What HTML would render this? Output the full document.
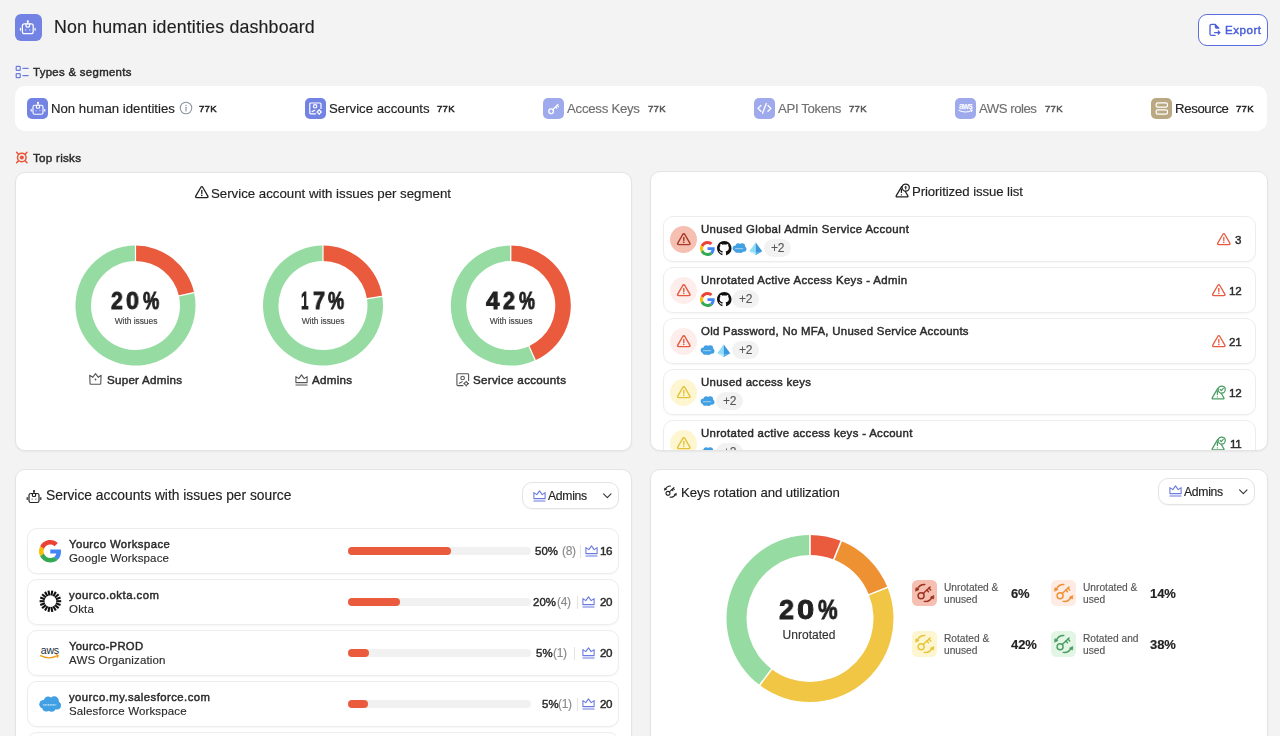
<!DOCTYPE html><html><head><meta charset="utf-8"><style>
html,body{margin:0;padding:0;}
body{width:1280px;height:736px;overflow:hidden;background:#f3f3f3;position:relative;font-family:"Liberation Sans",sans-serif;color:#222;}
.t{position:absolute;line-height:1;white-space:nowrap;will-change:transform;-webkit-text-stroke:0.15px currentColor;}
.b{position:absolute;box-sizing:border-box;}
.i{position:absolute;overflow:visible;}
</style></head><body><div style="position:relative;width:1280px;height:736px;overflow:hidden;">
<div class="b" style="left:15px;top:14px;width:27px;height:27px;background:#7283e3;border-radius:6px;"></div>
<svg class="i" style="left:17.4px;top:19.1px;width:21.6px;height:18.36px;" viewBox="0 0 20 17"><g fill="none" stroke="#fff" stroke-width="1.15" stroke-linecap="round" stroke-linejoin="round" ><rect x="5" y="4.5" width="10" height="9" rx="1.8"/><path d="M10 2.6v1.9"/><path d="M8.4 4.6v1.9q0 1 1 1h1.2q1 0 1-1V4.6"/><path d="M3.2 8.6v1.8M16.8 8.6v1.8"/></g><circle cx="10" cy="2.1" r="1.05" fill="#fff"/><circle cx="8.1" cy="10.1" r="0.55" fill="#fff"/><circle cx="11.9" cy="10.1" r="0.55" fill="#fff"/></svg>
<div class="t" style="top:19.33px;font-size:17.8px;color:#1f1f1f;letter-spacing:0.162px;left:53.80px;">Non human identities dashboard</div>
<div class="b" style="left:1198px;top:14px;width:70px;height:32px;border:1px solid #5b6ee0;border-radius:9px;background:#fff;"></div>
<svg class="i" style="left:1207.5px;top:23px;width:14px;height:14px;" viewBox="0 0 14 14"><g fill="none" stroke="#4a5fd8" stroke-width="1.3" stroke-linecap="round" stroke-linejoin="round" ><path d="M7.2 1.4H3.6Q2 1.4 2 3V10.9Q2 12.4 3.6 12.4H7"/><path d="M7.4 1.6L10.9 5.1H8.4Q7.4 5.1 7.4 4.1Z" fill="#4a5fd8"/><path d="M6.6 9.6H10.6"/></g><path d="M10.2 7.4L12.4 9.6L10.2 11.8Z" fill="#4a5fd8" stroke="#4a5fd8" stroke-width="0.6" stroke-linejoin="round"/></svg>
<div class="t" style="top:24.18px;font-size:11.6px;-webkit-text-stroke:0.45px #4a5fd8;color:#4a5fd8;letter-spacing:0.495px;left:1225.00px;">Export</div>
<svg class="i" style="left:15px;top:65px;width:15px;height:14px;" viewBox="0 0 15 14"><g fill="none" stroke="#6b7be0" stroke-width="1.2" stroke-linecap="round" stroke-linejoin="round" ><rect x="1.2" y="1.3" width="4" height="4" rx="0.6"/><rect x="1.2" y="8.6" width="4" height="4" rx="0.6"/><path d="M7.9 3.3h5.3M7.9 10.6h5.3"/></g></svg>
<div class="t" style="top:67.15px;font-size:11.4px;-webkit-text-stroke:0.45px #2b2b2b;color:#2b2b2b;letter-spacing:0.315px;left:32.80px;">Types &amp; segments</div>
<div class="b" style="left:15px;top:86px;width:1252px;height:45px;background:#fff;border-radius:10px;"></div>
<div class="b" style="left:27px;top:98px;width:21px;height:21px;background:#7283e3;border-radius:5px;"></div>
<svg class="i" style="left:27px;top:98px;width:21px;height:21px;" viewBox="0 0 21 21"><g transform="translate(1,2.7)"><g fill="none" stroke="#fff" stroke-width="1.15" stroke-linecap="round" stroke-linejoin="round" ><rect x="5" y="4.5" width="10" height="9" rx="1.8"/><path d="M10 2.6v1.9"/><path d="M8.4 4.6v1.9q0 1 1 1h1.2q1 0 1-1V4.6"/><path d="M3.2 8.6v1.8M16.8 8.6v1.8"/></g><circle cx="10" cy="2.1" r="1.05" fill="#fff"/><circle cx="8.1" cy="10.1" r="0.55" fill="#fff"/><circle cx="11.9" cy="10.1" r="0.55" fill="#fff"/></g></svg>
<div class="t" style="top:101.93px;font-size:13.2px;left:51.00px;">Non human identities</div>
<div class="t" style="top:103.97px;font-size:9.6px;-webkit-text-stroke:0.45px #222;letter-spacing:0.259px;left:199.00px;">77K</div>
<svg class="i" style="left:178.5px;top:101.4px;width:14px;height:14px;" viewBox="0 0 14 14"><circle cx="7" cy="7" r="5.75" fill="none" stroke="#8a929c" stroke-width="1.05"/><path d="M7 6.3v3.6" stroke="#8a929c" stroke-width="1.1" stroke-linecap="round"/><circle cx="7" cy="4.4" r="0.65" fill="#8a929c"/></svg>
<div class="b" style="left:305px;top:98px;width:21px;height:21px;background:#7283e3;border-radius:5px;"></div>
<svg class="i" style="left:305px;top:98px;width:21px;height:21px;" viewBox="0 0 21 21"><g fill="none" stroke="#fff" stroke-width="1.2" stroke-linecap="round" stroke-linejoin="round" ><path d="M10.6 15.8H5.9Q4.8 15.8 4.8 14.7V6.1Q4.8 5 5.9 5H14.9Q16 5 16 6.1V10.4"/><circle cx="10.1" cy="8.3" r="1.7"/><path d="M7.1 13.6L9.7 12.3"/><circle cx="14.2" cy="14" r="1.55"/><path d="M14.2 11.6v0.7M14.2 15.7v0.7M16.6 14h-0.7M12.5 14h-0.7"/></g></svg>
<div class="t" style="top:101.93px;font-size:13.2px;letter-spacing:0.012px;left:329.00px;">Service accounts</div>
<div class="t" style="top:103.97px;font-size:9.6px;-webkit-text-stroke:0.45px #222;letter-spacing:0.259px;left:437.00px;">77K</div>
<div class="b" style="left:542.5px;top:98px;width:21px;height:21px;background:#9faaed;border-radius:5px;"></div>
<svg class="i" style="left:542.5px;top:98px;width:21px;height:21px;" viewBox="0 0 21 21"><g fill="none" stroke="#fff" stroke-width="1.3" stroke-linecap="round" stroke-linejoin="round" ><circle cx="8.1" cy="13.3" r="2.35"/><path d="M9.7 11.7L15 6.4M12.6 8.8L13.9 10.1M14.1 7.3L15.4 8.6"/></g></svg>
<div class="t" style="top:101.93px;font-size:13.2px;color:#6f6f6f;letter-spacing:-0.256px;left:567.00px;">Access Keys</div>
<div class="t" style="top:103.97px;font-size:9.6px;-webkit-text-stroke:0.45px #555;color:#555;letter-spacing:0.259px;left:647.50px;">77K</div>
<div class="b" style="left:753.5px;top:98px;width:21px;height:21px;background:#9faaed;border-radius:5px;"></div>
<svg class="i" style="left:753.5px;top:98px;width:21px;height:21px;" viewBox="0 0 21 21"><g fill="none" stroke="#fff" stroke-width="1.3" stroke-linecap="round" stroke-linejoin="round" ><path d="M6.9 7.5L4 10.4L6.9 13.3M14 7.5L16.9 10.4L14 13.3M12.3 5.5L8.5 15.3"/></g></svg>
<div class="t" style="top:101.93px;font-size:13.2px;color:#6f6f6f;letter-spacing:-0.348px;left:778.00px;">API Tokens</div>
<div class="t" style="top:103.97px;font-size:9.6px;-webkit-text-stroke:0.45px #555;color:#555;letter-spacing:0.259px;left:848.50px;">77K</div>
<div class="b" style="left:954.5px;top:98px;width:21px;height:21px;background:#9faaed;border-radius:5px;"></div>
<svg class="i" style="left:954.5px;top:98px;width:21px;height:21px;" viewBox="0 0 21 21"><text x="10.6" y="10.9" text-anchor="middle" font-size="8.2" fill="#fff" stroke="#fff" stroke-width="0.25" letter-spacing="-0.4" font-family="Liberation Sans">aws</text><path d="M3.8 12.4q6.6 3.4 13.2 0" fill="none" stroke="#fff" stroke-width="1" stroke-linecap="round"/><path d="M15.6 11.6l1.5 0.6-0.5 1.4" fill="none" stroke="#fff" stroke-width="0.9" stroke-linecap="round"/></svg>
<div class="t" style="top:101.93px;font-size:13.2px;color:#6f6f6f;letter-spacing:-0.482px;left:979.00px;">AWS roles</div>
<div class="t" style="top:103.97px;font-size:9.6px;-webkit-text-stroke:0.45px #555;color:#555;letter-spacing:0.259px;left:1045.00px;">77K</div>
<div class="b" style="left:1150.5px;top:98px;width:21px;height:21px;background:#baa882;border-radius:5px;"></div>
<svg class="i" style="left:1150.5px;top:98px;width:21px;height:21px;" viewBox="0 0 21 21"><g fill="none" stroke="#fff" stroke-width="1.2" stroke-linecap="round" stroke-linejoin="round" ><rect x="5.1" y="4.8" width="11.4" height="4.3" rx="1.6"/><rect x="5.1" y="11.9" width="11.4" height="4.2" rx="1.6"/><path d="M7.2 7h0.1M7.2 14h0.1" stroke-opacity="0.5"/></g></svg>
<div class="t" style="top:101.93px;font-size:13.2px;letter-spacing:-0.356px;left:1175.00px;">Resource</div>
<div class="t" style="top:103.97px;font-size:9.6px;-webkit-text-stroke:0.45px #222;letter-spacing:0.259px;left:1236.00px;">77K</div>
<svg class="i" style="left:15px;top:151px;width:14px;height:13px;" viewBox="0 0 14 13"><g fill="none" stroke="#e8553a" stroke-width="1.5" stroke-linecap="round" stroke-linejoin="round" ><circle cx="6.8" cy="6.5" r="4.3"/><path d="M1.6 1.3l1.8 1.8M12 1.3l-1.8 1.8M1.6 11.7l1.8-1.8M12 11.7l-1.8-1.8"/></g><circle cx="6.8" cy="6.5" r="2.05" fill="#e8553a"/></svg>
<div class="t" style="top:152.18px;font-size:11.6px;-webkit-text-stroke:0.45px #2b2b2b;color:#2b2b2b;letter-spacing:0.279px;left:33.00px;">Top risks</div>
<div class="b" style="left:15px;top:171.5px;width:617px;height:279px;background:#fff;border-radius:10px;border:1px solid #e4e4e4;box-shadow:0 1px 2px rgba(0,0,0,0.05);"></div>
<svg class="i" style="left:195px;top:186px;width:14px;height:13px;" viewBox="0 0 14 13"><g fill="none" stroke="#222" stroke-width="1.3" stroke-linecap="round" stroke-linejoin="round" ><path d="M5.75 1.5Q6.8 -0.2 7.85 1.5L12.7 9.9Q13.7 11.6 11.7 11.6H1.9Q-0.1 11.6 0.9 9.9Z"/><path d="M6.8 4.5v2.9"/></g><circle cx="6.8" cy="9.4" r="0.78" fill="#222"/></svg>
<div class="t" style="top:187.04px;font-size:13.3px;letter-spacing:-0.026px;left:211.00px;">Service account with issues per segment</div>
<svg class="i" style="left:73px;top:243px;width:125px;height:125px;" viewBox="73 243 125 125"><path fill="#e95b3c" d="M135.50 245.60A60 60 0 0 1 194.06 292.51L178.93 295.89A44.5 44.5 0 0 0 135.50 261.10Z"/><path fill="#96dca2" d="M194.06 292.51A60 60 0 1 1 135.50 245.60L135.50 261.10A44.5 44.5 0 1 0 178.93 295.89Z"/><path d="M135.50 244.60L135.50 262.10" stroke="#fff" stroke-width="1.2"/><path d="M195.03 292.29L177.95 296.11" stroke="#fff" stroke-width="1.2"/></svg>
<div class="t" style="top:288.50px;left:110.75px;font-size:24.4px;font-weight:700;color:#222;transform:scaleX(0.8714);transform-origin:0 0;-webkit-text-stroke:0.9px #222;">2</div>
<div class="t" style="top:288.50px;left:126.15px;font-size:24.4px;font-weight:700;color:#222;transform:scaleX(0.9526);transform-origin:0 0;-webkit-text-stroke:0.9px #222;">0</div>
<div class="t" style="top:288.50px;left:143.15px;font-size:24.4px;font-weight:700;color:#222;transform:scaleX(0.7460);transform-origin:0 0;-webkit-text-stroke:0.9px #222;">%</div>
<div class="t" style="top:317.00px;font-size:8.5px;color:#444;letter-spacing:-0.065px;left:85.50px;width:100px;text-align:center;">With issues</div>
<svg class="i" style="left:261px;top:243px;width:125px;height:125px;" viewBox="261 243 125 125"><path fill="#e95b3c" d="M323.00 245.60A60 60 0 0 1 382.26 296.21L366.95 298.64A44.5 44.5 0 0 0 323.00 261.10Z"/><path fill="#96dca2" d="M382.26 296.21A60 60 0 1 1 323.00 245.60L323.00 261.10A44.5 44.5 0 1 0 366.95 298.64Z"/><path d="M323.00 244.60L323.00 262.10" stroke="#fff" stroke-width="1.2"/><path d="M383.25 296.06L365.96 298.80" stroke="#fff" stroke-width="1.2"/></svg>
<div class="t" style="top:288.50px;left:301.15px;font-size:24.4px;font-weight:700;color:#222;transform:scaleX(0.5538);transform-origin:0 0;-webkit-text-stroke:0.9px #222;">1</div>
<div class="t" style="top:288.50px;left:312.55px;font-size:24.4px;font-weight:700;color:#222;transform:scaleX(0.8861);transform-origin:0 0;-webkit-text-stroke:0.9px #222;">7</div>
<div class="t" style="top:288.50px;left:328.15px;font-size:24.4px;font-weight:700;color:#222;transform:scaleX(0.7414);transform-origin:0 0;-webkit-text-stroke:0.9px #222;">%</div>
<div class="t" style="top:317.00px;font-size:8.5px;color:#444;letter-spacing:-0.065px;left:273.00px;width:100px;text-align:center;">With issues</div>
<svg class="i" style="left:448px;top:243px;width:125px;height:125px;" viewBox="448 243 125 125"><path fill="#e95b3c" d="M510.80 245.60A60 60 0 0 1 535.32 360.36L528.98 346.21A44.5 44.5 0 0 0 510.80 261.10Z"/><path fill="#96dca2" d="M535.32 360.36A60 60 0 1 1 510.80 245.60L510.80 261.10A44.5 44.5 0 1 0 528.98 346.21Z"/><path d="M510.80 244.60L510.80 262.10" stroke="#fff" stroke-width="1.2"/><path d="M535.73 361.27L528.58 345.30" stroke="#fff" stroke-width="1.2"/></svg>
<div class="t" style="top:288.50px;left:486.25px;font-size:24.4px;font-weight:700;color:#222;transform:scaleX(0.9895);transform-origin:0 0;-webkit-text-stroke:0.9px #222;">4</div>
<div class="t" style="top:288.50px;left:502.65px;font-size:24.4px;font-weight:700;color:#222;transform:scaleX(0.8861);transform-origin:0 0;-webkit-text-stroke:0.9px #222;">2</div>
<div class="t" style="top:288.50px;left:518.55px;font-size:24.4px;font-weight:700;color:#222;transform:scaleX(0.7368);transform-origin:0 0;-webkit-text-stroke:0.9px #222;">%</div>
<div class="t" style="top:317.00px;font-size:8.5px;color:#444;letter-spacing:-0.065px;left:460.80px;width:100px;text-align:center;">With issues</div>
<svg class="i" style="left:89px;top:372.5px;width:13px;height:12px;" viewBox="0 0 13 12"><g fill="none" stroke="#555" stroke-width="1.1" stroke-linecap="round" stroke-linejoin="round" ><path d="M0.7 2.3L3.7 4.3L6.5 0.6L9.3 4.3L12.1 2.3L11.7 10.9Q11.6 11.3 11.2 11.3H1.6Q1.2 11.3 1.1 10.9Z"/></g><circle cx="6.5" cy="6.5" r="0.9" fill="#555"/></svg>
<div class="t" style="top:373.98px;font-size:11.6px;-webkit-text-stroke:0.45px #2b2b2b;color:#2b2b2b;letter-spacing:0.253px;left:106.75px;">Super Admins</div>
<svg class="i" style="left:294.5px;top:373.5px;width:13px;height:12px;" viewBox="0 0 13 12"><g fill="none" stroke="#555" stroke-width="1.1" stroke-linecap="round" stroke-linejoin="round" ><path d="M0.9 2.6L3.8 4.6L6.5 0.9L9.2 4.6L12.1 2.6V8.6H0.9Z"/><path d="M0.9 11h11.2"/></g></svg>
<div class="t" style="top:373.98px;font-size:11.6px;-webkit-text-stroke:0.45px #2b2b2b;color:#2b2b2b;letter-spacing:0.264px;left:311.75px;">Admins</div>
<svg class="i" style="left:455.5px;top:372.5px;width:14px;height:14px;" viewBox="0 0 14 14"><g fill="none" stroke="#555" stroke-width="1.1" stroke-linecap="round" stroke-linejoin="round" ><path d="M7 12.6H1.9Q0.9 12.6 0.9 11.6V1.7Q0.9 0.8 1.9 0.8H11.7Q12.6 0.8 12.6 1.7V7.4"/><circle cx="6.6" cy="5" r="1.8"/><path d="M3.3 10.2L6.2 8.8"/><circle cx="10.2" cy="10.6" r="1.6"/><path d="M10.2 8.2v0.6M10.2 12.4v0.6M12.6 10.6h-0.6M8.4 10.6h-0.6"/></g></svg>
<div class="t" style="top:373.98px;font-size:11.6px;-webkit-text-stroke:0.45px #2b2b2b;color:#2b2b2b;letter-spacing:0.311px;left:472.70px;">Service accounts</div>
<div class="b" style="left:650px;top:170.5px;width:618px;height:280px;background:#fff;border-radius:10px;border:1px solid #e4e4e4;box-shadow:0 1px 2px rgba(0,0,0,0.05);"></div>
<svg class="i" style="left:894.5px;top:182.1px;width:16px;height:16px;" viewBox="0 0 16 16"><g fill="none" stroke="#222" stroke-width="1.25" stroke-linecap="round" stroke-linejoin="round" ><path d="M6.6 4.6L1.2 13.9Q0.8 14.9 1.9 14.9H12.2Q13.3 14.9 12.9 13.9L10.2 9.3"/><circle cx="10.7" cy="5.6" r="3.6"/><path d="M6.4 7v3.4"/></g><circle cx="6.4" cy="12.9" r="0.65" fill="#222"/><path d="M10.7 3.7L12.3 5.6H9.1Z" fill="#222"/><path d="M10.7 5.2v2.3" stroke="#222" stroke-width="1.1"/></svg>
<div class="t" style="top:185.13px;font-size:13.2px;letter-spacing:-0.094px;left:912.00px;">Prioritized issue list</div>
<div style="position:absolute;left:652px;top:172px;width:615px;height:278px;overflow:hidden;border-radius:0 0 9px 9px;">
<div style="position:absolute;left:-652px;top:-172px;width:1280px;height:736px;">
<div class="b" style="left:663px;top:216px;width:592.5px;height:46px;background:#fff;border:1px solid #ededed;border-radius:10px;box-shadow:0 1px 1.5px rgba(0,0,0,0.04);"></div>
<div class="b" style="left:669.8px;top:225.7px;width:27.2px;height:27.2px;background:#f5c0b2;border-radius:50%;"></div>
<svg class="i" style="left:676.6px;top:232.6px;width:14px;height:13px;" viewBox="0 0 14 13"><g fill="none" stroke="#a83a26" stroke-width="1.45" stroke-linecap="round" stroke-linejoin="round" ><path d="M5.75 1.5Q6.8 -0.2 7.85 1.5L12.7 9.9Q13.7 11.6 11.7 11.6H1.9Q-0.1 11.6 0.9 9.9Z"/><path d="M6.8 4.5v2.9"/></g><circle cx="6.8" cy="9.4" r="0.78" fill="#a83a26"/></svg>
<div class="t" style="top:223.60px;font-size:11.4px;-webkit-text-stroke:0.45px #2b2b2b;color:#2b2b2b;letter-spacing:0.376px;left:700.50px;">Unused Global Admin Service Account</div>
<svg class="i" style="left:700px;top:241px;width:15px;height:15px" viewBox="0 0 48 48"><path fill="#EA4335" d="M24 9.5c3.54 0 6.71 1.22 9.21 3.6l6.85-6.85C35.9 2.38 30.47 0 24 0 14.62 0 6.51 5.38 2.56 13.22l7.98 6.19C12.43 13.72 17.74 9.5 24 9.5z"/><path fill="#4285F4" d="M46.98 24.55c0-1.57-.15-3.09-.38-4.55H24v9.02h12.94c-.58 2.96-2.26 5.48-4.78 7.18l7.73 6c4.51-4.18 7.09-10.36 7.09-17.65z"/><path fill="#FBBC05" d="M10.53 28.59c-.48-1.45-.76-2.99-.76-4.59s.27-3.14.76-4.59l-7.98-6.19C.92 16.46 0 20.12 0 24c0 3.88.92 7.54 2.56 10.78l7.97-6.19z"/><path fill="#34A853" d="M24 48c6.48 0 11.93-2.13 15.89-5.81l-7.73-6c-2.15 1.45-4.92 2.3-8.16 2.3-6.26 0-11.57-4.22-13.47-9.91l-7.98 6.19C6.51 42.62 14.62 48 24 48z"/></svg>
<svg class="i" style="left:716.5px;top:241px;width:14.5px;height:14.5px" viewBox="0 0 16 16"><path fill="#111" d="M8 0C3.58 0 0 3.58 0 8c0 3.54 2.29 6.53 5.47 7.59.4.07.55-.17.55-.38 0-.19-.01-.82-.01-1.49-2.01.37-2.53-.49-2.69-.94-.09-.23-.48-.94-.82-1.13-.28-.15-.68-.52-.01-.53.63-.01 1.08.58 1.23.82.72 1.21 1.87.87 2.33.66.07-.52.28-.87.51-1.07-1.78-.2-3.64-.89-3.64-3.95 0-.87.31-1.59.82-2.15-.08-.2-.36-1.02.08-2.12 0 0 .67-.21 2.2.82.64-.18 1.32-.27 2-.27.68 0 1.36.09 2 .27 1.53-1.04 2.2-.82 2.2-.82.44 1.1.16 1.92.08 2.12.51.56.82 1.27.82 2.15 0 3.07-1.87 3.75-3.65 3.95.29.25.54.73.54 1.48 0 1.07-.01 1.93-.01 2.2 0 .21.15.46.55.38A8.013 8.013 0 0016 8c0-4.42-3.58-8-8-8z"/></svg>
<svg class="i" style="left:732px;top:242.5px;width:14.6px;height:10.2px" viewBox="0 0 23 16"><g fill="#41a0e3"><circle cx="5.4" cy="8.3" r="4.3"/><circle cx="9.9" cy="4.6" r="4.2"/><circle cx="16" cy="5" r="4.7"/><circle cx="18.7" cy="9.5" r="4.1"/><circle cx="13.4" cy="11.5" r="4.3"/><circle cx="8.2" cy="11.4" r="4.1"/></g><path d="M5 8.8h13" stroke="#d6ebfa" stroke-width="1.7" stroke-dasharray="1.1 0.5" opacity="0.75"/></svg>
<svg class="i" style="left:748.5px;top:242px;width:13.5px;height:13.5px" viewBox="0 0 14 14"><path fill="#8fdcf7" d="M7 0.6L0.3 9.6L7 13.4Z"/><path fill="#3b96dc" d="M7 0.6L13.7 9.6L7 13.4Z"/><path fill="#c6effc" d="M0.3 9.6L7 13.4L7 11Z"/><path fill="#5fb9ee" d="M13.7 9.6L7 13.4L7 11Z"/></svg>
<div class="b" style="left:764px;top:239px;width:27px;height:18px;background:#f2f2f2;border-radius:9px;"></div>
<div class="t" style="top:241.84px;font-size:12px;color:#555;letter-spacing:-0.382px;left:764.30px;width:27px;text-align:center;">+2</div>
<svg class="i" style="left:1216.6px;top:232.5px;width:14px;height:13px;" viewBox="0 0 14 13"><g fill="none" stroke="#e85a3f" stroke-width="1.3" stroke-linecap="round" stroke-linejoin="round" ><path d="M5.75 1.5Q6.8 -0.2 7.85 1.5L12.7 9.9Q13.7 11.6 11.7 11.6H1.9Q-0.1 11.6 0.9 9.9Z"/><path d="M6.8 4.5v2.9"/></g><circle cx="6.8" cy="9.4" r="0.78" fill="#e85a3f"/></svg>
<div class="t" style="top:234.18px;font-size:11.6px;-webkit-text-stroke:0.45px #2b2b2b;color:#2b2b2b;right:39.00px;text-align:right;letter-spacing:-0.3px;">3</div>
<div class="b" style="left:663px;top:267px;width:592.5px;height:46px;background:#fff;border:1px solid #ededed;border-radius:10px;box-shadow:0 1px 1.5px rgba(0,0,0,0.04);"></div>
<div class="b" style="left:669.8px;top:276.7px;width:27.2px;height:27.2px;background:#fdeeeb;border-radius:50%;"></div>
<svg class="i" style="left:676.6px;top:283.6px;width:14px;height:13px;" viewBox="0 0 14 13"><g fill="none" stroke="#e85a3f" stroke-width="1.45" stroke-linecap="round" stroke-linejoin="round" ><path d="M5.75 1.5Q6.8 -0.2 7.85 1.5L12.7 9.9Q13.7 11.6 11.7 11.6H1.9Q-0.1 11.6 0.9 9.9Z"/><path d="M6.8 4.5v2.9"/></g><circle cx="6.8" cy="9.4" r="0.78" fill="#e85a3f"/></svg>
<div class="t" style="top:274.60px;font-size:11.4px;-webkit-text-stroke:0.45px #2b2b2b;color:#2b2b2b;letter-spacing:0.373px;left:700.50px;">Unrotated Active Access Keys - Admin</div>
<svg class="i" style="left:700px;top:292px;width:15px;height:15px" viewBox="0 0 48 48"><path fill="#EA4335" d="M24 9.5c3.54 0 6.71 1.22 9.21 3.6l6.85-6.85C35.9 2.38 30.47 0 24 0 14.62 0 6.51 5.38 2.56 13.22l7.98 6.19C12.43 13.72 17.74 9.5 24 9.5z"/><path fill="#4285F4" d="M46.98 24.55c0-1.57-.15-3.09-.38-4.55H24v9.02h12.94c-.58 2.96-2.26 5.48-4.78 7.18l7.73 6c4.51-4.18 7.09-10.36 7.09-17.65z"/><path fill="#FBBC05" d="M10.53 28.59c-.48-1.45-.76-2.99-.76-4.59s.27-3.14.76-4.59l-7.98-6.19C.92 16.46 0 20.12 0 24c0 3.88.92 7.54 2.56 10.78l7.97-6.19z"/><path fill="#34A853" d="M24 48c6.48 0 11.93-2.13 15.89-5.81l-7.73-6c-2.15 1.45-4.92 2.3-8.16 2.3-6.26 0-11.57-4.22-13.47-9.91l-7.98 6.19C6.51 42.62 14.62 48 24 48z"/></svg>
<svg class="i" style="left:716.5px;top:292px;width:14.5px;height:14.5px" viewBox="0 0 16 16"><path fill="#111" d="M8 0C3.58 0 0 3.58 0 8c0 3.54 2.29 6.53 5.47 7.59.4.07.55-.17.55-.38 0-.19-.01-.82-.01-1.49-2.01.37-2.53-.49-2.69-.94-.09-.23-.48-.94-.82-1.13-.28-.15-.68-.52-.01-.53.63-.01 1.08.58 1.23.82.72 1.21 1.87.87 2.33.66.07-.52.28-.87.51-1.07-1.78-.2-3.64-.89-3.64-3.95 0-.87.31-1.59.82-2.15-.08-.2-.36-1.02.08-2.12 0 0 .67-.21 2.2.82.64-.18 1.32-.27 2-.27.68 0 1.36.09 2 .27 1.53-1.04 2.2-.82 2.2-.82.44 1.1.16 1.92.08 2.12.51.56.82 1.27.82 2.15 0 3.07-1.87 3.75-3.65 3.95.29.25.54.73.54 1.48 0 1.07-.01 1.93-.01 2.2 0 .21.15.46.55.38A8.013 8.013 0 0016 8c0-4.42-3.58-8-8-8z"/></svg>
<div class="b" style="left:732px;top:290px;width:27px;height:18px;background:#f2f2f2;border-radius:9px;"></div>
<div class="t" style="top:292.84px;font-size:12px;color:#555;letter-spacing:-0.382px;left:732.30px;width:27px;text-align:center;">+2</div>
<svg class="i" style="left:1211.7px;top:283.5px;width:14px;height:13px;" viewBox="0 0 14 13"><g fill="none" stroke="#e85a3f" stroke-width="1.3" stroke-linecap="round" stroke-linejoin="round" ><path d="M5.75 1.5Q6.8 -0.2 7.85 1.5L12.7 9.9Q13.7 11.6 11.7 11.6H1.9Q-0.1 11.6 0.9 9.9Z"/><path d="M6.8 4.5v2.9"/></g><circle cx="6.8" cy="9.4" r="0.78" fill="#e85a3f"/></svg>
<div class="t" style="top:285.18px;font-size:11.6px;-webkit-text-stroke:0.45px #2b2b2b;color:#2b2b2b;right:39.00px;text-align:right;letter-spacing:-0.3px;">12</div>
<div class="b" style="left:663px;top:318px;width:592.5px;height:46px;background:#fff;border:1px solid #ededed;border-radius:10px;box-shadow:0 1px 1.5px rgba(0,0,0,0.04);"></div>
<div class="b" style="left:669.8px;top:327.7px;width:27.2px;height:27.2px;background:#fdeeeb;border-radius:50%;"></div>
<svg class="i" style="left:676.6px;top:334.6px;width:14px;height:13px;" viewBox="0 0 14 13"><g fill="none" stroke="#e85a3f" stroke-width="1.45" stroke-linecap="round" stroke-linejoin="round" ><path d="M5.75 1.5Q6.8 -0.2 7.85 1.5L12.7 9.9Q13.7 11.6 11.7 11.6H1.9Q-0.1 11.6 0.9 9.9Z"/><path d="M6.8 4.5v2.9"/></g><circle cx="6.8" cy="9.4" r="0.78" fill="#e85a3f"/></svg>
<div class="t" style="top:325.60px;font-size:11.4px;-webkit-text-stroke:0.45px #2b2b2b;color:#2b2b2b;letter-spacing:0.297px;left:700.50px;">Old Password, No MFA, Unused Service Accounts</div>
<svg class="i" style="left:700px;top:344.5px;width:14.6px;height:10.2px" viewBox="0 0 23 16"><g fill="#41a0e3"><circle cx="5.4" cy="8.3" r="4.3"/><circle cx="9.9" cy="4.6" r="4.2"/><circle cx="16" cy="5" r="4.7"/><circle cx="18.7" cy="9.5" r="4.1"/><circle cx="13.4" cy="11.5" r="4.3"/><circle cx="8.2" cy="11.4" r="4.1"/></g><path d="M5 8.8h13" stroke="#d6ebfa" stroke-width="1.7" stroke-dasharray="1.1 0.5" opacity="0.75"/></svg>
<svg class="i" style="left:716.5px;top:344px;width:13.5px;height:13.5px" viewBox="0 0 14 14"><path fill="#8fdcf7" d="M7 0.6L0.3 9.6L7 13.4Z"/><path fill="#3b96dc" d="M7 0.6L13.7 9.6L7 13.4Z"/><path fill="#c6effc" d="M0.3 9.6L7 13.4L7 11Z"/><path fill="#5fb9ee" d="M13.7 9.6L7 13.4L7 11Z"/></svg>
<div class="b" style="left:732px;top:341px;width:27px;height:18px;background:#f2f2f2;border-radius:9px;"></div>
<div class="t" style="top:343.84px;font-size:12px;color:#555;letter-spacing:-0.382px;left:732.30px;width:27px;text-align:center;">+2</div>
<svg class="i" style="left:1211.7px;top:334.5px;width:14px;height:13px;" viewBox="0 0 14 13"><g fill="none" stroke="#e85a3f" stroke-width="1.3" stroke-linecap="round" stroke-linejoin="round" ><path d="M5.75 1.5Q6.8 -0.2 7.85 1.5L12.7 9.9Q13.7 11.6 11.7 11.6H1.9Q-0.1 11.6 0.9 9.9Z"/><path d="M6.8 4.5v2.9"/></g><circle cx="6.8" cy="9.4" r="0.78" fill="#e85a3f"/></svg>
<div class="t" style="top:336.18px;font-size:11.6px;-webkit-text-stroke:0.45px #2b2b2b;color:#2b2b2b;right:39.00px;text-align:right;letter-spacing:-0.3px;">21</div>
<div class="b" style="left:663px;top:369px;width:592.5px;height:46px;background:#fff;border:1px solid #ededed;border-radius:10px;box-shadow:0 1px 1.5px rgba(0,0,0,0.04);"></div>
<div class="b" style="left:669.8px;top:378.7px;width:27.2px;height:27.2px;background:#fdf6d0;border-radius:50%;"></div>
<svg class="i" style="left:676.6px;top:385.6px;width:14px;height:13px;" viewBox="0 0 14 13"><g fill="none" stroke="#e3c23a" stroke-width="1.45" stroke-linecap="round" stroke-linejoin="round" ><path d="M5.75 1.5Q6.8 -0.2 7.85 1.5L12.7 9.9Q13.7 11.6 11.7 11.6H1.9Q-0.1 11.6 0.9 9.9Z"/><path d="M6.8 4.5v2.9"/></g><circle cx="6.8" cy="9.4" r="0.78" fill="#e3c23a"/></svg>
<div class="t" style="top:376.60px;font-size:11.4px;-webkit-text-stroke:0.45px #2b2b2b;color:#2b2b2b;letter-spacing:0.325px;left:700.50px;">Unused access keys</div>
<svg class="i" style="left:700px;top:395.5px;width:14.6px;height:10.2px" viewBox="0 0 23 16"><g fill="#41a0e3"><circle cx="5.4" cy="8.3" r="4.3"/><circle cx="9.9" cy="4.6" r="4.2"/><circle cx="16" cy="5" r="4.7"/><circle cx="18.7" cy="9.5" r="4.1"/><circle cx="13.4" cy="11.5" r="4.3"/><circle cx="8.2" cy="11.4" r="4.1"/></g><path d="M5 8.8h13" stroke="#d6ebfa" stroke-width="1.7" stroke-dasharray="1.1 0.5" opacity="0.75"/></svg>
<div class="b" style="left:716px;top:392px;width:27px;height:18px;background:#f2f2f2;border-radius:9px;"></div>
<div class="t" style="top:394.84px;font-size:12px;color:#555;letter-spacing:-0.382px;left:716.30px;width:27px;text-align:center;">+2</div>
<svg class="i" style="left:1211.0px;top:384.1px;width:16px;height:16px;" viewBox="0 0 16 16"><g fill="none" stroke="#4a9d62" stroke-width="1.25" stroke-linecap="round" stroke-linejoin="round" ><path d="M6.6 4.6L1.2 13.9Q0.8 14.9 1.9 14.9H12.2Q13.3 14.9 12.9 13.9L10.2 9.3"/><circle cx="10.7" cy="5.6" r="3.6"/><path d="M6.4 7v3.4"/></g><circle cx="6.4" cy="12.9" r="0.65" fill="#4a9d62"/><path d="M9.2 5.5l1.1 1.1 2-2.2" fill="none" stroke="#4a9d62" stroke-width="1.2" stroke-linecap="round" stroke-linejoin="round" /></svg>
<div class="t" style="top:387.18px;font-size:11.6px;-webkit-text-stroke:0.45px #2b2b2b;color:#2b2b2b;right:39.00px;text-align:right;letter-spacing:-0.3px;">12</div>
<div class="b" style="left:663px;top:420px;width:592.5px;height:46px;background:#fff;border:1px solid #ededed;border-radius:10px;box-shadow:0 1px 1.5px rgba(0,0,0,0.04);"></div>
<div class="b" style="left:669.8px;top:429.7px;width:27.2px;height:27.2px;background:#fdf6d0;border-radius:50%;"></div>
<svg class="i" style="left:676.6px;top:436.6px;width:14px;height:13px;" viewBox="0 0 14 13"><g fill="none" stroke="#e3c23a" stroke-width="1.45" stroke-linecap="round" stroke-linejoin="round" ><path d="M5.75 1.5Q6.8 -0.2 7.85 1.5L12.7 9.9Q13.7 11.6 11.7 11.6H1.9Q-0.1 11.6 0.9 9.9Z"/><path d="M6.8 4.5v2.9"/></g><circle cx="6.8" cy="9.4" r="0.78" fill="#e3c23a"/></svg>
<div class="t" style="top:427.60px;font-size:11.4px;-webkit-text-stroke:0.45px #2b2b2b;color:#2b2b2b;letter-spacing:0.340px;left:700.50px;">Unrotated active access keys - Account</div>
<svg class="i" style="left:700px;top:446.5px;width:14.6px;height:10.2px" viewBox="0 0 23 16"><g fill="#41a0e3"><circle cx="5.4" cy="8.3" r="4.3"/><circle cx="9.9" cy="4.6" r="4.2"/><circle cx="16" cy="5" r="4.7"/><circle cx="18.7" cy="9.5" r="4.1"/><circle cx="13.4" cy="11.5" r="4.3"/><circle cx="8.2" cy="11.4" r="4.1"/></g><path d="M5 8.8h13" stroke="#d6ebfa" stroke-width="1.7" stroke-dasharray="1.1 0.5" opacity="0.75"/></svg>
<div class="b" style="left:716px;top:443px;width:27px;height:18px;background:#f2f2f2;border-radius:9px;"></div>
<div class="t" style="top:445.84px;font-size:12px;color:#555;letter-spacing:-0.382px;left:716.30px;width:27px;text-align:center;">+2</div>
<svg class="i" style="left:1211.0px;top:435.1px;width:16px;height:16px;" viewBox="0 0 16 16"><g fill="none" stroke="#4a9d62" stroke-width="1.25" stroke-linecap="round" stroke-linejoin="round" ><path d="M6.6 4.6L1.2 13.9Q0.8 14.9 1.9 14.9H12.2Q13.3 14.9 12.9 13.9L10.2 9.3"/><circle cx="10.7" cy="5.6" r="3.6"/><path d="M6.4 7v3.4"/></g><circle cx="6.4" cy="12.9" r="0.65" fill="#4a9d62"/><path d="M9.2 5.5l1.1 1.1 2-2.2" fill="none" stroke="#4a9d62" stroke-width="1.2" stroke-linecap="round" stroke-linejoin="round" /></svg>
<div class="t" style="top:438.18px;font-size:11.6px;-webkit-text-stroke:0.45px #2b2b2b;color:#2b2b2b;right:39.00px;text-align:right;letter-spacing:-0.3px;">11</div>
</div></div>
<div class="b" style="left:15px;top:469px;width:617px;height:300px;background:#fff;border-radius:10px;border:1px solid #e4e4e4;box-shadow:0 1px 2px rgba(0,0,0,0.05);"></div>
<svg class="i" style="left:24.3px;top:488.7px;width:20px;height:17px;" viewBox="0 0 20 17"><g fill="none" stroke="#222" stroke-width="1.2" stroke-linecap="round" stroke-linejoin="round" ><rect x="5" y="4.5" width="10" height="9" rx="1.8"/><path d="M10 2.6v1.9"/><path d="M8.4 4.6v1.9q0 1 1 1h1.2q1 0 1-1V4.6"/><path d="M3.2 8.6v1.8M16.8 8.6v1.8"/></g><circle cx="10" cy="2.1" r="1.05" fill="#222"/><circle cx="8.1" cy="10.1" r="0.55" fill="#222"/><circle cx="11.9" cy="10.1" r="0.55" fill="#222"/></svg>
<div class="t" style="top:489.32px;font-size:13.8px;left:45.50px;">Service accounts with issues per source</div>
<div class="b" style="left:522px;top:482px;width:97px;height:27.3px;border:1px solid #e4e4e4;border-radius:10px;background:#fff;box-shadow:0 1px 1.5px rgba(0,0,0,0.04);"></div>
<svg class="i" style="left:532.8px;top:489.6px;width:13px;height:12px;" viewBox="0 0 13 12"><g fill="none" stroke="#6b7be0" stroke-width="1.1" stroke-linecap="round" stroke-linejoin="round" ><path d="M0.9 2.6L3.8 4.6L6.5 0.9L9.2 4.6L12.1 2.6V8.6H0.9Z"/><path d="M0.9 11h11.2"/></g></svg>
<div class="t" style="top:490.47px;font-size:12.2px;letter-spacing:-0.296px;left:548.00px;">Admins</div>
<svg class="i" style="left:602.5px;top:493px;width:9px;height:6px;" viewBox="0 0 9 6"><path d="M0.6 0.8L4.3 4.6L8 0.8" fill="none" stroke="#333" stroke-width="1.1" stroke-linecap="round" stroke-linejoin="round" /></svg>
<div class="b" style="left:26.5px;top:527.5px;width:592.5px;height:46px;background:#fff;border:1px solid #ededed;border-radius:10px;box-shadow:0 1px 1.5px rgba(0,0,0,0.04);"></div>
<svg class="i" style="left:38.7px;top:539.5px;width:22.5px;height:22.5px" viewBox="0 0 48 48"><path fill="#EA4335" d="M24 9.5c3.54 0 6.71 1.22 9.21 3.6l6.85-6.85C35.9 2.38 30.47 0 24 0 14.62 0 6.51 5.38 2.56 13.22l7.98 6.19C12.43 13.72 17.74 9.5 24 9.5z"/><path fill="#4285F4" d="M46.98 24.55c0-1.57-.15-3.09-.38-4.55H24v9.02h12.94c-.58 2.96-2.26 5.48-4.78 7.18l7.73 6c4.51-4.18 7.09-10.36 7.09-17.65z"/><path fill="#FBBC05" d="M10.53 28.59c-.48-1.45-.76-2.99-.76-4.59s.27-3.14.76-4.59l-7.98-6.19C.92 16.46 0 20.12 0 24c0 3.88.92 7.54 2.56 10.78l7.97-6.19z"/><path fill="#34A853" d="M24 48c6.48 0 11.93-2.13 15.89-5.81l-7.73-6c-2.15 1.45-4.92 2.3-8.16 2.3-6.26 0-11.57-4.22-13.47-9.91l-7.98 6.19C6.51 42.62 14.62 48 24 48z"/></svg>
<div class="t" style="top:538.83px;font-size:11.3px;-webkit-text-stroke:0.45px #2b2b2b;color:#2b2b2b;letter-spacing:0.437px;left:68.50px;">Yourco Workspace</div>
<div class="t" style="top:552.97px;font-size:11.5px;color:#2a2a2a;letter-spacing:0.158px;left:68.50px;">Google Workspace</div>
<div class="b" style="left:348px;top:546.75px;width:183px;height:8.2px;background:#f1f1f1;border-radius:4.1px;"></div>
<div class="b" style="left:348px;top:546.75px;width:102.5px;height:8.2px;background:#e95b3c;border-radius:4.1px;"></div>
<div class="t" style="top:546.35px;font-size:11.4px;-webkit-text-stroke:0.45px #2b2b2b;color:#2b2b2b;letter-spacing:0.100px;left:534.80px;">50%</div>
<div class="t" style="top:544.94px;font-size:12px;color:#8a8a8a;letter-spacing:-0.306px;left:561.70px;">(8)</div>
<div class="b" style="left:579.7px;top:544.6px;width:1px;height:13px;background:#e4e4e4;"></div>
<svg class="i" style="left:584.8px;top:545.2px;width:13px;height:12px;" viewBox="0 0 13 12"><g fill="none" stroke="#6b7be0" stroke-width="1.1" stroke-linecap="round" stroke-linejoin="round" ><path d="M0.9 2.6L3.8 4.6L6.5 0.9L9.2 4.6L12.1 2.6V8.6H0.9Z"/><path d="M0.9 11h11.2"/></g></svg>
<div class="t" style="top:545.28px;font-size:11.6px;-webkit-text-stroke:0.45px #2b2b2b;color:#2b2b2b;right:668.00px;text-align:right;letter-spacing:-0.4px;">16</div>
<div class="b" style="left:26.5px;top:578.5px;width:592.5px;height:46px;background:#fff;border:1px solid #ededed;border-radius:10px;box-shadow:0 1px 1.5px rgba(0,0,0,0.04);"></div>
<svg class="i" style="left:38.7px;top:590.4px;width:23px;height:23px" viewBox="0 0 23 23"><g stroke="#111" stroke-width="2.1"><path d="M12.41 5.49L13.28 0.56"/><path d="M14.30 6.18L16.80 1.85"/><path d="M15.84 7.47L19.67 4.26"/><path d="M16.85 9.22L21.55 7.51"/><path d="M17.20 11.20L22.20 11.20"/><path d="M16.85 13.18L21.55 14.89"/><path d="M15.84 14.93L19.67 18.14"/><path d="M14.30 16.22L16.80 20.55"/><path d="M12.41 16.91L13.28 21.84"/><path d="M10.39 16.91L9.52 21.84"/><path d="M8.50 16.22L6.00 20.55"/><path d="M6.96 14.93L3.13 18.14"/><path d="M5.95 13.18L1.25 14.89"/><path d="M5.60 11.20L0.60 11.20"/><path d="M5.95 9.22L1.25 7.51"/><path d="M6.96 7.47L3.13 4.26"/><path d="M8.50 6.18L6.00 1.85"/><path d="M10.39 5.49L9.52 0.56"/></g></svg>
<div class="t" style="top:589.83px;font-size:11.3px;-webkit-text-stroke:0.45px #2b2b2b;color:#2b2b2b;letter-spacing:0.503px;left:68.50px;">yourco.okta.com</div>
<div class="t" style="top:603.97px;font-size:11.5px;color:#2a2a2a;letter-spacing:0.197px;left:68.50px;">Okta</div>
<div class="b" style="left:348px;top:597.75px;width:183px;height:8.2px;background:#f1f1f1;border-radius:4.1px;"></div>
<div class="b" style="left:348px;top:597.75px;width:51.5px;height:8.2px;background:#e95b3c;border-radius:4.1px;"></div>
<div class="t" style="top:597.35px;font-size:11.4px;-webkit-text-stroke:0.45px #2b2b2b;color:#2b2b2b;letter-spacing:0.100px;left:533.00px;">20%</div>
<div class="t" style="top:595.94px;font-size:12px;color:#8a8a8a;letter-spacing:-0.306px;left:557.00px;">(4)</div>
<div class="b" style="left:576.5px;top:595.6px;width:1px;height:13px;background:#e4e4e4;"></div>
<svg class="i" style="left:582px;top:596.2px;width:13px;height:12px;" viewBox="0 0 13 12"><g fill="none" stroke="#6b7be0" stroke-width="1.1" stroke-linecap="round" stroke-linejoin="round" ><path d="M0.9 2.6L3.8 4.6L6.5 0.9L9.2 4.6L12.1 2.6V8.6H0.9Z"/><path d="M0.9 11h11.2"/></g></svg>
<div class="t" style="top:596.28px;font-size:11.6px;-webkit-text-stroke:0.45px #2b2b2b;color:#2b2b2b;right:668.00px;text-align:right;letter-spacing:-0.4px;">20</div>
<div class="b" style="left:26.5px;top:629.5px;width:592.5px;height:46px;background:#fff;border:1px solid #ededed;border-radius:10px;box-shadow:0 1px 1.5px rgba(0,0,0,0.04);"></div>
<svg class="i" style="left:38px;top:644px;width:24px;height:20px" viewBox="0 0 24 20"><text x="11.8" y="9.6" text-anchor="middle" font-size="10.6" fill="#232f3e" font-family="Liberation Sans" letter-spacing="-0.3">aws</text><path d="M2.5 11.6q8.5 4.4 17.2 0" fill="none" stroke="#f39c1f" stroke-width="1.3" stroke-linecap="round"/><path d="M18.3 10.6l1.9 0.9-0.9 1.9" fill="none" stroke="#f39c1f" stroke-width="1.1" stroke-linecap="round"/></svg>
<div class="t" style="top:640.83px;font-size:11.3px;-webkit-text-stroke:0.45px #2b2b2b;color:#2b2b2b;letter-spacing:0.293px;left:68.50px;">Yourco-PROD</div>
<div class="t" style="top:654.97px;font-size:11.5px;color:#2a2a2a;letter-spacing:0.153px;left:68.50px;">AWS Organization</div>
<div class="b" style="left:348px;top:648.75px;width:183px;height:8.2px;background:#f1f1f1;border-radius:4.1px;"></div>
<div class="b" style="left:348px;top:648.75px;width:21px;height:8.2px;background:#e95b3c;border-radius:4.1px;"></div>
<div class="t" style="top:648.35px;font-size:11.4px;-webkit-text-stroke:0.45px #2b2b2b;color:#2b2b2b;letter-spacing:0.145px;left:536.00px;">5%</div>
<div class="t" style="top:646.94px;font-size:12px;color:#8a8a8a;letter-spacing:-0.306px;left:553.00px;">(1)</div>
<div class="b" style="left:573.7px;top:646.6px;width:1px;height:13px;background:#e4e4e4;"></div>
<svg class="i" style="left:582px;top:647.2px;width:13px;height:12px;" viewBox="0 0 13 12"><g fill="none" stroke="#6b7be0" stroke-width="1.1" stroke-linecap="round" stroke-linejoin="round" ><path d="M0.9 2.6L3.8 4.6L6.5 0.9L9.2 4.6L12.1 2.6V8.6H0.9Z"/><path d="M0.9 11h11.2"/></g></svg>
<div class="t" style="top:647.28px;font-size:11.6px;-webkit-text-stroke:0.45px #2b2b2b;color:#2b2b2b;right:668.00px;text-align:right;letter-spacing:-0.4px;">20</div>
<div class="b" style="left:26.5px;top:680.5px;width:592.5px;height:46px;background:#fff;border:1px solid #ededed;border-radius:10px;box-shadow:0 1px 1.5px rgba(0,0,0,0.04);"></div>
<svg class="i" style="left:38.3px;top:695.8px;width:23.4px;height:16px" viewBox="0 0 23 16"><g fill="#41a0e3"><circle cx="5.4" cy="8.3" r="4.3"/><circle cx="9.9" cy="4.6" r="4.2"/><circle cx="16" cy="5" r="4.7"/><circle cx="18.7" cy="9.5" r="4.1"/><circle cx="13.4" cy="11.5" r="4.3"/><circle cx="8.2" cy="11.4" r="4.1"/></g><path d="M5 8.8h13" stroke="#d6ebfa" stroke-width="1.7" stroke-dasharray="1.1 0.5" opacity="0.75"/></svg>
<div class="t" style="top:691.83px;font-size:11.3px;-webkit-text-stroke:0.45px #2b2b2b;color:#2b2b2b;letter-spacing:0.460px;left:68.50px;">yourco.my.salesforce.com</div>
<div class="t" style="top:705.97px;font-size:11.5px;color:#2a2a2a;letter-spacing:0.147px;left:68.50px;">Salesforce Workspace</div>
<div class="b" style="left:348px;top:699.75px;width:183px;height:8.2px;background:#f1f1f1;border-radius:4.1px;"></div>
<div class="b" style="left:348px;top:699.75px;width:19.5px;height:8.2px;background:#e95b3c;border-radius:4.1px;"></div>
<div class="t" style="top:699.35px;font-size:11.4px;-webkit-text-stroke:0.45px #2b2b2b;color:#2b2b2b;letter-spacing:0.145px;left:541.70px;">5%</div>
<div class="t" style="top:697.94px;font-size:12px;color:#8a8a8a;letter-spacing:-0.306px;left:557.50px;">(1)</div>
<div class="b" style="left:576.5px;top:697.6px;width:1px;height:13px;background:#e4e4e4;"></div>
<svg class="i" style="left:582px;top:698.2px;width:13px;height:12px;" viewBox="0 0 13 12"><g fill="none" stroke="#6b7be0" stroke-width="1.1" stroke-linecap="round" stroke-linejoin="round" ><path d="M0.9 2.6L3.8 4.6L6.5 0.9L9.2 4.6L12.1 2.6V8.6H0.9Z"/><path d="M0.9 11h11.2"/></g></svg>
<div class="t" style="top:698.28px;font-size:11.6px;-webkit-text-stroke:0.45px #2b2b2b;color:#2b2b2b;right:668.00px;text-align:right;letter-spacing:-0.4px;">20</div>
<div class="b" style="left:26.5px;top:731.5px;width:592.5px;height:46px;background:#fff;border:1px solid #ededed;border-radius:10px;box-shadow:0 1px 1.5px rgba(0,0,0,0.04);"></div>
<div class="b" style="left:650px;top:469px;width:618px;height:300px;background:#fff;border-radius:10px;border:1px solid #e4e4e4;box-shadow:0 1px 2px rgba(0,0,0,0.05);"></div>
<svg class="i" style="left:662px;top:482.6px;width:16.5px;height:16.5px;" viewBox="0 0 25 25"><g fill="none" stroke="#222" stroke-width="1.65" stroke-linecap="round" stroke-linejoin="round" ><circle cx="9.1" cy="15.7" r="3"/><path d="M11.2 13.6L18.1 6.9"/><path d="M14.9 10L16.5 11.7M16.9 8.1L18.7 9.9"/><path d="M12.8 4.5A7.8 7.8 0 0 0 5.3 9.5"/><path d="M12.2 21.4A7.8 7.8 0 0 0 20.3 16.9"/></g><path d="M3.6 11.2L3.9 7.7L7.1 9.5Z" fill="#222" stroke="#222" stroke-width="0.7" stroke-linejoin="round"/><path d="M21.9 15.5L21.6 19L18.4 17.2Z" fill="#222" stroke="#222" stroke-width="0.7" stroke-linejoin="round"/></svg>
<div class="t" style="top:485.63px;font-size:13.2px;letter-spacing:-0.087px;left:680.60px;">Keys rotation and utilization</div>
<div class="b" style="left:1158px;top:477.8px;width:97px;height:27.3px;border:1px solid #e4e4e4;border-radius:10px;background:#fff;box-shadow:0 1px 1.5px rgba(0,0,0,0.04);"></div>
<svg class="i" style="left:1168.8px;top:485.40000000000003px;width:13px;height:12px;" viewBox="0 0 13 12"><g fill="none" stroke="#6b7be0" stroke-width="1.1" stroke-linecap="round" stroke-linejoin="round" ><path d="M0.9 2.6L3.8 4.6L6.5 0.9L9.2 4.6L12.1 2.6V8.6H0.9Z"/><path d="M0.9 11h11.2"/></g></svg>
<div class="t" style="top:486.27px;font-size:12.2px;letter-spacing:-0.296px;left:1184.00px;">Admins</div>
<svg class="i" style="left:1238.5px;top:488.8px;width:9px;height:6px;" viewBox="0 0 9 6"><path d="M0.6 0.8L4.3 4.6L8 0.8" fill="none" stroke="#333" stroke-width="1.1" stroke-linecap="round" stroke-linejoin="round" /></svg>
<svg class="i" style="left:724px;top:533px;width:172px;height:172px;" viewBox="724 533 172 172"><path fill="#e95b3c" d="M810.00 535.00A83.5 83.5 0 0 1 841.23 541.06L833.75 559.61A63.5 63.5 0 0 0 810.00 555.00Z"/><path fill="#ee9133" d="M841.23 541.06A83.5 83.5 0 0 1 887.44 587.27L868.89 594.75A63.5 63.5 0 0 0 833.75 559.61Z"/><path fill="#f1c644" d="M887.44 587.27A83.5 83.5 0 0 1 759.66 685.12L771.71 669.16A63.5 63.5 0 0 0 868.89 594.75Z"/><path fill="#96dca2" d="M759.66 685.12A83.5 83.5 0 0 1 810.00 535.00L810.00 555.00A63.5 63.5 0 0 0 771.71 669.16Z"/><path d="M810.00 534.00L810.00 556.00" stroke="#fff" stroke-width="1.6"/><path d="M841.60 540.13L833.37 560.53" stroke="#fff" stroke-width="1.6"/><path d="M888.37 586.90L867.97 595.13" stroke="#fff" stroke-width="1.6"/><path d="M759.05 685.91L772.32 668.36" stroke="#fff" stroke-width="1.6"/></svg>
<div class="t" style="top:594.82px;left:779.25px;font-size:28.5px;font-weight:700;color:#222;transform:scaleX(0.9483);transform-origin:0 0;-webkit-text-stroke:0.9px #222;">2</div>
<div class="t" style="top:594.82px;left:796.85px;font-size:28.5px;font-weight:700;color:#222;transform:scaleX(1.0874);transform-origin:0 0;-webkit-text-stroke:0.9px #222;">0</div>
<div class="t" style="top:594.82px;left:818.45px;font-size:28.5px;font-weight:700;color:#222;transform:scaleX(0.7727);transform-origin:0 0;-webkit-text-stroke:0.9px #222;">%</div>
<div class="t" style="top:629.44px;font-size:12px;color:#333;letter-spacing:0.037px;left:748.50px;width:120px;text-align:center;">Unrotated</div>
<div class="b" style="left:912px;top:580.3px;width:25.2px;height:25.4px;background:#f5c0b2;border-radius:5.5px;"></div>
<svg class="i" style="left:912px;top:580.3px;width:25px;height:25px;" viewBox="0 0 25 25"><g fill="none" stroke="#9e3220" stroke-width="1.45" stroke-linecap="round" stroke-linejoin="round" ><circle cx="9.1" cy="15.7" r="3"/><path d="M11.2 13.6L18.1 6.9"/><path d="M14.9 10L16.5 11.7M16.9 8.1L18.7 9.9"/><path d="M12.8 4.5A7.8 7.8 0 0 0 5.3 9.5"/><path d="M12.2 21.4A7.8 7.8 0 0 0 20.3 16.9"/></g><path d="M3.6 11.2L3.9 7.7L7.1 9.5Z" fill="#9e3220" stroke="#9e3220" stroke-width="0.7" stroke-linejoin="round"/><path d="M21.9 15.5L21.6 19L18.4 17.2Z" fill="#9e3220" stroke="#9e3220" stroke-width="0.7" stroke-linejoin="round"/></svg>
<div class="t" style="top:583.07px;font-size:10.2px;color:#555;left:944.30px;">Unrotated &amp;</div>
<div class="t" style="top:594.67px;font-size:10.2px;color:#555;left:944.30px;">unused</div>
<div class="t" style="top:586.90px;font-size:13px;font-weight:700;letter-spacing:-0.145px;left:1011.40px;">6%</div>
<div class="b" style="left:1051px;top:580.3px;width:25.2px;height:25.4px;background:#fdebe4;border-radius:5.5px;"></div>
<svg class="i" style="left:1051px;top:580.3px;width:25px;height:25px;" viewBox="0 0 25 25"><g fill="none" stroke="#ee9133" stroke-width="1.45" stroke-linecap="round" stroke-linejoin="round" ><circle cx="9.1" cy="15.7" r="3"/><path d="M11.2 13.6L18.1 6.9"/><path d="M14.9 10L16.5 11.7M16.9 8.1L18.7 9.9"/><path d="M12.8 4.5A7.8 7.8 0 0 0 5.3 9.5"/><path d="M12.2 21.4A7.8 7.8 0 0 0 20.3 16.9"/></g><path d="M3.6 11.2L3.9 7.7L7.1 9.5Z" fill="#ee9133" stroke="#ee9133" stroke-width="0.7" stroke-linejoin="round"/><path d="M21.9 15.5L21.6 19L18.4 17.2Z" fill="#ee9133" stroke="#ee9133" stroke-width="0.7" stroke-linejoin="round"/></svg>
<div class="t" style="top:583.07px;font-size:10.2px;color:#555;left:1083.30px;">Unrotated &amp;</div>
<div class="t" style="top:594.67px;font-size:10.2px;color:#555;left:1083.30px;">used</div>
<div class="t" style="top:586.90px;font-size:13px;font-weight:700;letter-spacing:-0.100px;left:1150.30px;">14%</div>
<div class="b" style="left:912px;top:631.3px;width:25.2px;height:25.4px;background:#fdf6d0;border-radius:5.5px;"></div>
<svg class="i" style="left:912px;top:631.3px;width:25px;height:25px;" viewBox="0 0 25 25"><g fill="none" stroke="#e8c43a" stroke-width="1.45" stroke-linecap="round" stroke-linejoin="round" ><circle cx="9.1" cy="15.7" r="3"/><path d="M11.2 13.6L18.1 6.9"/><path d="M14.9 10L16.5 11.7M16.9 8.1L18.7 9.9"/><path d="M12.8 4.5A7.8 7.8 0 0 0 5.3 9.5"/><path d="M12.2 21.4A7.8 7.8 0 0 0 20.3 16.9"/></g><path d="M3.6 11.2L3.9 7.7L7.1 9.5Z" fill="#e8c43a" stroke="#e8c43a" stroke-width="0.7" stroke-linejoin="round"/><path d="M21.9 15.5L21.6 19L18.4 17.2Z" fill="#e8c43a" stroke="#e8c43a" stroke-width="0.7" stroke-linejoin="round"/></svg>
<div class="t" style="top:634.07px;font-size:10.2px;color:#555;left:944.30px;">Rotated &amp;</div>
<div class="t" style="top:645.67px;font-size:10.2px;color:#555;left:944.30px;">unused</div>
<div class="t" style="top:637.90px;font-size:13px;font-weight:700;letter-spacing:-0.100px;left:1011.40px;">42%</div>
<div class="b" style="left:1051px;top:631.3px;width:25.2px;height:25.4px;background:#e3f6e6;border-radius:5.5px;"></div>
<svg class="i" style="left:1051px;top:631.3px;width:25px;height:25px;" viewBox="0 0 25 25"><g fill="none" stroke="#4a9d62" stroke-width="1.45" stroke-linecap="round" stroke-linejoin="round" ><circle cx="9.1" cy="15.7" r="3"/><path d="M11.2 13.6L18.1 6.9"/><path d="M14.9 10L16.5 11.7M16.9 8.1L18.7 9.9"/><path d="M12.8 4.5A7.8 7.8 0 0 0 5.3 9.5"/><path d="M12.2 21.4A7.8 7.8 0 0 0 20.3 16.9"/></g><path d="M3.6 11.2L3.9 7.7L7.1 9.5Z" fill="#4a9d62" stroke="#4a9d62" stroke-width="0.7" stroke-linejoin="round"/><path d="M21.9 15.5L21.6 19L18.4 17.2Z" fill="#4a9d62" stroke="#4a9d62" stroke-width="0.7" stroke-linejoin="round"/></svg>
<div class="t" style="top:634.07px;font-size:10.2px;color:#555;left:1083.30px;">Rotated and</div>
<div class="t" style="top:645.67px;font-size:10.2px;color:#555;left:1083.30px;">used</div>
<div class="t" style="top:637.90px;font-size:13px;font-weight:700;letter-spacing:-0.100px;left:1150.30px;">38%</div>
</div></body></html>
